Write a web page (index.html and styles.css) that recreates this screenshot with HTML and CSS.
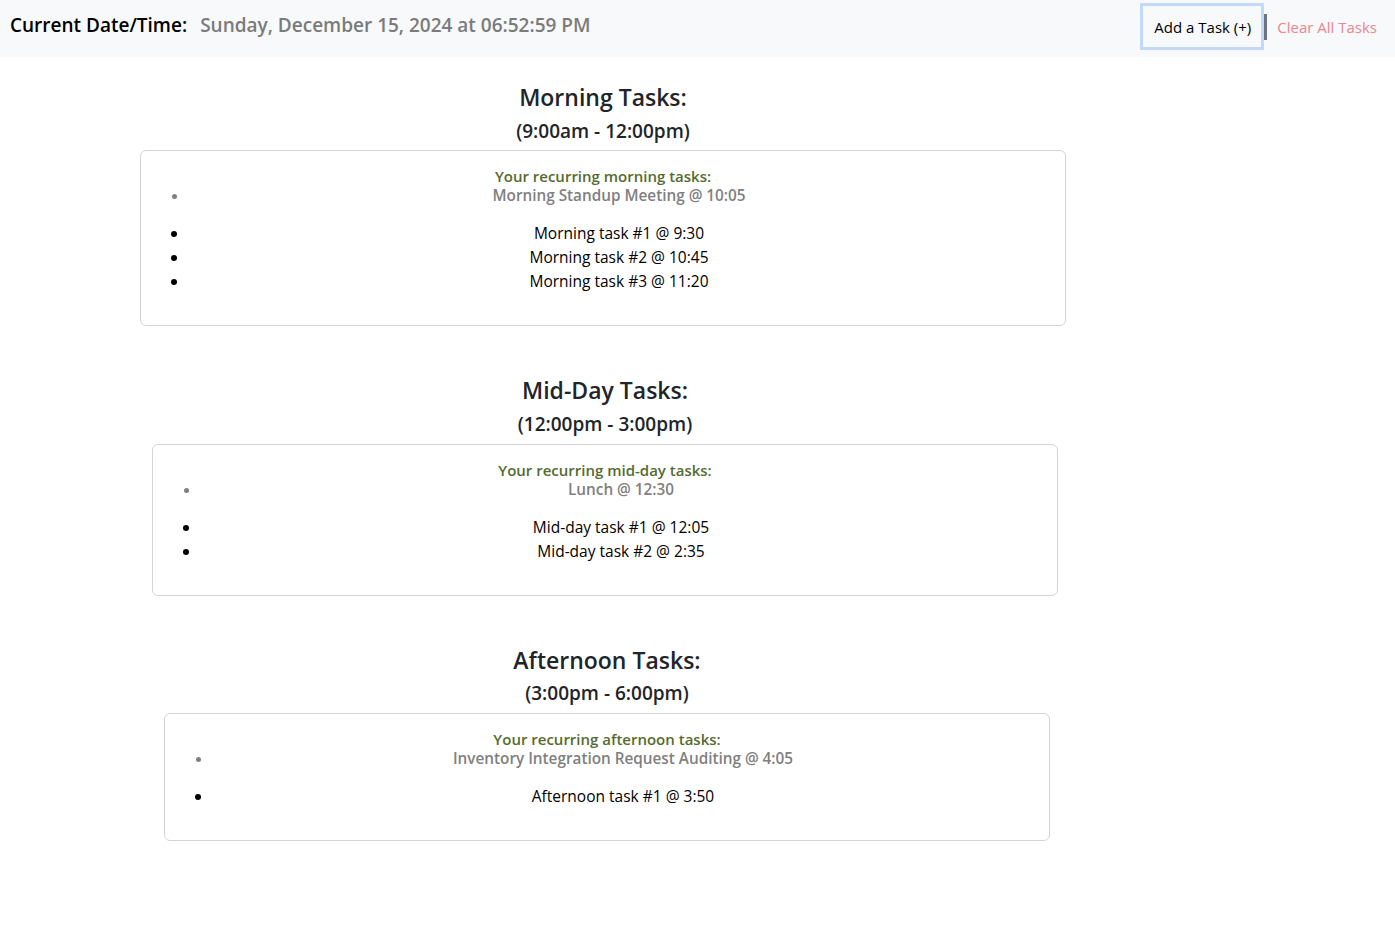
FILE: index.html
```html
<!DOCTYPE html>
<html lang="en">
<head>
<meta charset="utf-8">
<title>Daily Tasks</title>
<link rel="stylesheet" href="styles.css">
</head>
<body>
<nav class="topbar">
  <div class="now">
    <span class="now-label">Current Date/Time:</span>
    <span class="now-value">Sunday, December 15, 2024 at 06:52:59 PM</span>
  </div>
  <div class="actions">
    <button class="add-btn" type="button">Add a Task (+)</button>
    <span class="divider"></span>
    <a class="clear-link" href="#">Clear All Tasks</a>
  </div>
</nav>

<main class="schedule">
  <section class="period period-morning">
    <h4 class="period-title">Morning Tasks:</h4>
    <h5 class="period-range">(9:00am - 12:00pm)</h5>
    <div class="card">
      <h6 class="recurring-title">Your recurring morning tasks:</h6>
      <ul class="recurring-list">
        <li>Morning Standup Meeting @ 10:05</li>
      </ul>
      <ul class="task-list">
        <li>Morning task #1 @ 9:30</li>
        <li>Morning task #2 @ 10:45</li>
        <li>Morning task #3 @ 11:20</li>
      </ul>
    </div>
  </section>

  <section class="period period-midday">
    <h4 class="period-title">Mid-Day Tasks:</h4>
    <h5 class="period-range">(12:00pm - 3:00pm)</h5>
    <div class="card">
      <h6 class="recurring-title">Your recurring mid-day tasks:</h6>
      <ul class="recurring-list">
        <li>Lunch @ 12:30</li>
      </ul>
      <ul class="task-list">
        <li>Mid-day task #1 @ 12:05</li>
        <li>Mid-day task #2 @ 2:35</li>
      </ul>
    </div>
  </section>

  <section class="period period-afternoon">
    <h4 class="period-title">Afternoon Tasks:</h4>
    <h5 class="period-range">(3:00pm - 6:00pm)</h5>
    <div class="card">
      <h6 class="recurring-title">Your recurring afternoon tasks:</h6>
      <ul class="recurring-list">
        <li>Inventory Integration Request Auditing @ 4:05</li>
      </ul>
      <ul class="task-list">
        <li>Afternoon task #1 @ 3:50</li>
      </ul>
    </div>
  </section>
</main>
</body>
</html>
```

FILE: styles.css
```css
* { box-sizing: border-box; }

body {
  margin: 0;
  font-family: "Open Sans", "Noto Sans", sans-serif;
  font-size: 16px;
  line-height: 1.5;
  color: #212529;
  background: #fff;
}

.topbar {
  display: flex;
  justify-content: space-between;
  align-items: flex-start;
  height: 57px;
  padding: 0 18px 0 10px;
  background: #f8f9fa;
}

.now {
  display: flex;
  gap: 13px;
  padding-top: 11px;
  font-size: 19px;
  line-height: 28px;
  font-weight: 600;
}

.now-label { color: #000; font-weight: 600; }
.now-value { color: #7b7b7b; font-weight: 600; }

.actions {
  display: flex;
  align-items: flex-start;
}

.add-btn {
  margin-top: 3px;
  height: 47px;
  padding: 0 10px 0 11px;
  font-family: inherit;
  font-size: 15px;
  color: #000;
  background: #f8f9fa;
  border: 3px solid #c2d9fb;
  border-radius: 0;
}

.divider {
  width: 3px;
  height: 26px;
  margin-top: 14px;
  background: #6c757d;
}

.clear-link {
  margin-left: 10px;
  padding-top: 15px;
  font-size: 15px;
  line-height: 24px;
  color: #ea868f;
  text-decoration: none;
}

.schedule {
  padding-top: 27px;
  padding-bottom: 40px;
}

.period + .period { margin-top: 51px; }

.period-morning { width: 926px; margin-left: 140px; }
.period-midday { width: 906px; margin-left: 152px; }
.period-afternoon { width: 886px; margin-left: 164px; }

.period-title {
  margin: 0 0 8px;
  text-align: center;
  font-size: 23px;
  line-height: 1.2;
  font-weight: 600;
}

.period-range {
  margin: 0 0 8px;
  text-align: center;
  font-size: 19px;
  line-height: 1.2;
  font-weight: 600;
}

.card {
  border: 1px solid #d5d5d5;
  border-radius: 6px;
  padding: 16px;
}

.recurring-title {
  margin: 0;
  text-align: center;
  font-size: 15px;
  line-height: 19px;
  font-weight: 600;
  color: #556b2f;
}

.recurring-list,
.task-list {
  margin: 0 0 16px;
  padding-left: 2rem;
  text-align: center;
}

.recurring-list {
  color: #808080;
  font-size: 15.3px;
  line-height: 19px;
  font-weight: 600;
}

.task-list {
  font-size: 15.5px;
  line-height: 24px;
  color: #000;
}
```
